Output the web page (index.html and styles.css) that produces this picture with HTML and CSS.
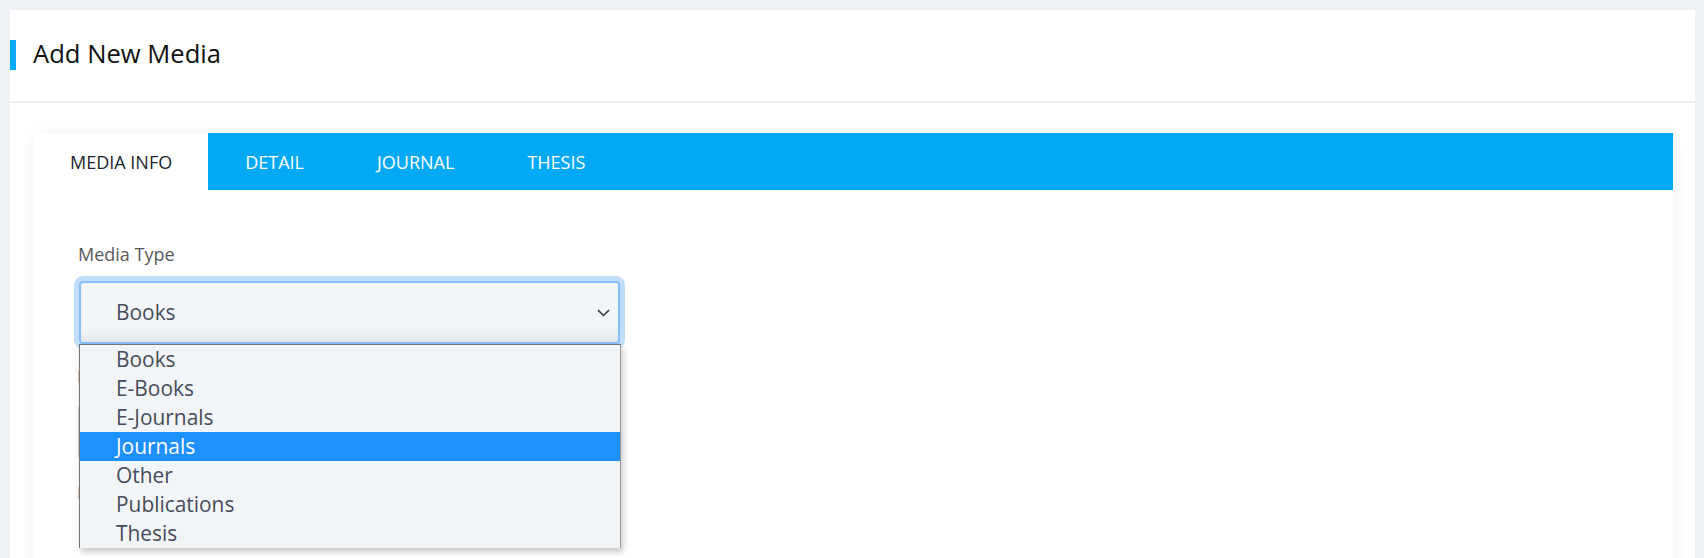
FILE: index.html
```html
<!DOCTYPE html>
<html lang="en">
<head>
<meta charset="utf-8">
<title>Add New Media</title>
<link rel="stylesheet" href="styles.css">
</head>
<body>
<div class="page">
  <div class="card">
    <div class="card-header">
      <span class="accent"></span>
      <h1 class="card-title">Add New Media</h1>
    </div>
    <div class="card-body">
      <div class="tab-panel">
        <nav class="tabs">
          <a class="tab active">MEDIA INFO</a>
          <a class="tab">DETAIL</a>
          <a class="tab">JOURNAL</a>
          <a class="tab">THESIS</a>
        </nav>
        <div class="tab-content">
          <div class="form-group">
            <label class="form-label">Media Type</label>
            <div class="select-wrap">
              <div class="select">
                <span class="select-value">Books</span>
                <svg class="chevron" width="13" height="8" viewBox="0 0 13 8"><path d="M1 1.2 L6.5 6.5 L12 1.2" fill="none" stroke="#3c3c3c" stroke-width="1.6"/></svg>
              </div>
              <ul class="listbox">
                <li class="option">Books</li>
                <li class="option">E-Books</li>
                <li class="option">E-Journals</li>
                <li class="option selected">Journals</li>
                <li class="option">Other</li>
                <li class="option">Publications</li>
                <li class="option">Thesis</li>
              </ul>
            </div>
          </div>
          <div class="form-group">
            <div class="label-stub"></div>
            <div class="input"></div>
          </div>
          <div class="form-group">
            <div class="label-stub"></div>
          </div>
        </div>
      </div>
    </div>
  </div>
</div>
</body>
</html>
```

FILE: styles.css
```css
* { box-sizing: border-box; }

body {
  margin: 0;
  background: #eef2f6;
  font-family: "Open Sans", "Noto Sans", sans-serif;
  height: 558px;
  overflow: hidden;
}

.page {
  padding: 10px 9px 0 10px;
}

.card {
  background: #ffffff;
  min-height: 600px;
}

.card-header {
  height: 93px;
  display: flex;
  align-items: center;
  border-bottom: 2px solid #eeeff1;
}

.accent {
  width: 6px;
  height: 30px;
  background: #03a9f4;
  margin-top: -1px;
}

.card-title {
  margin: 0 0 3px 17px;
  font-size: 25.6px;
  font-weight: 400;
  color: #111111;
  line-height: 36px;
}

.card-body {
  padding: 30px 22px 0 23px;
}

.tab-panel {
  background: #ffffff;
  box-shadow: 0 0 16px rgba(0, 0, 0, 0.05);
  min-height: 500px;
}

.tabs {
  display: flex;
  height: 57px;
  background: #03a9f4;
}

.tab {
  display: flex;
  align-items: center;
  padding: 0 36px 0 37px;
  font-size: 18px;
  color: #ffffff;
}

.tab.active {
  background: #ffffff;
  color: #1e2530;
}

.tab-content {
  padding: 52px 46px 40px 46px;
}

.form-group {
  margin-bottom: 27px;
}

.form-label {
  display: block;
  font-size: 18px;
  line-height: 24px;
  color: #5a5a5a;
  margin-bottom: 15px;
  margin-left: -1px;
}

.label-stub {
  width: 2px;
  height: 12px;
  margin: 6px 0 21px -1px;
  background: #e3c9ae;
}

.select-wrap {
  position: relative;
  width: 541px;
}

.select {
  height: 63px;
  display: flex;
  align-items: center;
  justify-content: space-between;
  padding: 0 8px 0 35px;
  background: #f3f6f9;
  border: 2px solid #85befa;
  border-radius: 4px;
  box-shadow: 0 0 0 5px #c0ddfc, inset 0 -12px 12px -8px rgba(0, 0, 0, 0.09);
}

.select-value {
  font-size: 20.9px;
  color: #474d5a;
  margin-top: -2px;
}

.chevron {
  display: block;
  margin-top: 1px;
}

.listbox {
  position: absolute;
  top: 100%;
  left: 0;
  width: 542px;
  margin: 0;
  padding: 0;
  list-style: none;
  background: #f2f5f8;
  border: 1px solid #767676;
  border-right-color: #9a9a9a;
  border-bottom: none;
  box-shadow: 2px 4px 6px rgba(0, 0, 0, 0.22);
  z-index: 5;
}

.option {
  height: 29px;
  line-height: 29px;
  padding-left: 36px;
  font-size: 20.9px;
  color: #474d5a;
}

.option.selected {
  background: #1e90ff;
  color: #ffffff;
}

.input {
  height: 56px;
  width: 541px;
  margin-left: -1px;
  border: 1px solid #c9ced4;
  border-radius: 4px;
  background: #f3f6f9;
}
```
